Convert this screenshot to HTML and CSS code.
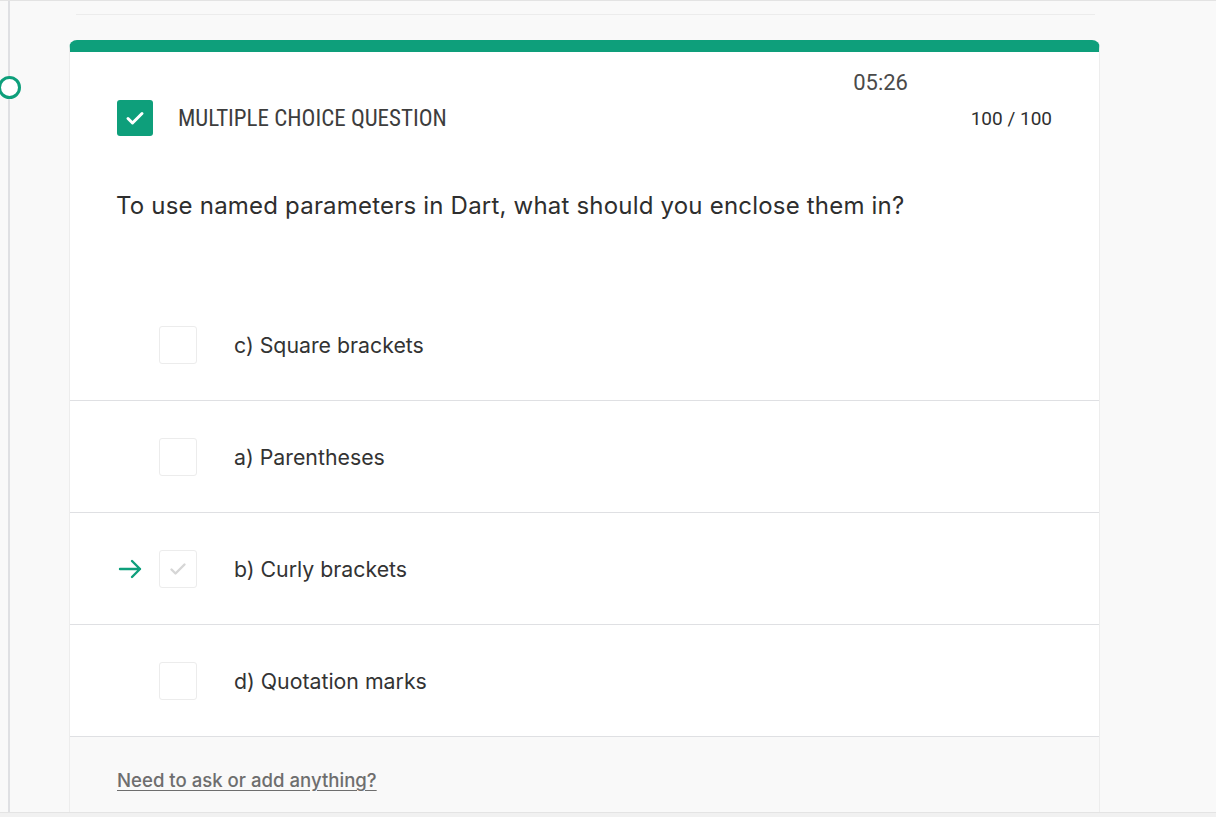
FILE: index.html
```html
<!DOCTYPE html>
<html lang="en">
<head>
<meta charset="utf-8">
<title>Multiple choice question</title>
<link rel="stylesheet" href="styles.css">
</head>
<body>
<div class="topline"></div>
<div class="layout">
  <aside class="rail">
    <span class="rail-dot"></span>
  </aside>
  <main class="content">
    <div class="prev-card"></div>
    <section class="card">
      <div class="timer-row"><span class="timer">05:26</span></div>
      <div class="head">
        <span class="head-check">
          <svg width="20" height="16" viewBox="0 0 20 16"><path d="M3 8.5l4.5 4.5L17 3.5" fill="none" stroke="#fff" stroke-width="3" stroke-linecap="round" stroke-linejoin="round"/></svg>
        </span>
        <span class="head-title">MULTIPLE CHOICE QUESTION</span>
        <span class="score">100 / 100</span>
      </div>
      <p class="question">To use named parameters in Dart, what should you enclose them in?</p>
      <ul class="options">
        <li class="option">
          <span class="arrow"></span>
          <span class="box"></span>
          <span class="label">c) Square brackets</span>
        </li>
        <li class="option">
          <span class="arrow"></span>
          <span class="box"></span>
          <span class="label">a) Parentheses</span>
        </li>
        <li class="option">
          <span class="arrow">
            <svg width="26" height="20" viewBox="0 0 26 20"><path d="M3 10h20M15 2l8 8-8 8" fill="none" stroke="#0e9f7b" stroke-width="2.4" stroke-linecap="round" stroke-linejoin="round"/></svg>
          </span>
          <span class="box">
            <svg width="18" height="14" viewBox="0 0 18 14"><path d="M2.5 7.5l4 4L15.5 2.5" fill="none" stroke="#d6d6d6" stroke-width="2.4" stroke-linecap="round" stroke-linejoin="round"/></svg>
          </span>
          <span class="label">b) Curly brackets</span>
        </li>
        <li class="option">
          <span class="arrow"></span>
          <span class="box"></span>
          <span class="label">d) Quotation marks</span>
        </li>
      </ul>
      <footer class="card-foot">
        <a class="ask" href="#">Need to ask or add anything?</a>
      </footer>
    </section>
  </main>
</div>
<div class="bottombar"></div>
</body>
</html>
```

FILE: styles.css
```css
html, body {
  margin: 0;
  padding: 0;
  height: 100%;
  overflow: hidden;
}
body {
  background: #f9f9f9;
  font-family: Inter, "Noto Sans", sans-serif;
  color: #333;
}
.topline {
  height: 1px;
  background: #e3e3e3;
}
.layout {
  display: flex;
  height: 811px;
}
.rail {
  width: 69px;
  flex: 0 0 69px;
  position: relative;
}
.rail::before {
  content: "";
  display: block;
  margin-left: 8px;
  width: 2px;
  height: 100%;
  background: #dfe0e3;
}
.rail-dot {
  position: absolute;
  left: -2px;
  top: 75px;
  width: 17px;
  height: 17px;
  border: 3px solid #0e9f7b;
  border-radius: 50%;
  background: #fff;
}
.content {
  width: 1031px;
  display: flex;
  flex-direction: column;
}
.prev-card {
  height: 13px;
  margin-left: 7px;
  margin-right: 5px;
  border-bottom: 1px solid #ececec;
  margin-bottom: 25px;
}
.card {
  flex: 1;
  display: flex;
  flex-direction: column;
  background: #fff;
  border-top: 12px solid #0e9f7b;
  border-left: 1px solid #ededed;
  border-right: 1px solid #ededed;
  border-radius: 8px 8px 0 0;
}
.timer-row {
  display: flex;
  justify-content: flex-end;
  padding: 18px 191px 0 0;
  height: 28px;
}
.timer {
  font-family: Roboto, "Liberation Sans", sans-serif;
  font-size: 22px;
  color: #4a4a4a;
  line-height: 26px;
}
.head {
  display: flex;
  align-items: center;
  padding: 2px 47px 0 47px;
  height: 36px;
}
.head-check {
  width: 36px;
  height: 36px;
  border-radius: 3px;
  background: #0e9f7b;
  display: flex;
  align-items: center;
  justify-content: center;
}
.head-title {
  margin-left: 25px;
  font-family: Roboto, "Liberation Sans", sans-serif;
  font-stretch: 87.5%;
  font-size: 23px;
  color: #3d3d3d;
}
.score {
  margin-left: auto;
  font-family: Roboto, "Liberation Sans", sans-serif;
  font-size: 19px;
  color: #2f2f2f;
}
.question {
  margin: 0;
  padding: 55px 48px 0 46px;
  height: 98px;
  font-size: 24px;
  letter-spacing: 0.2px;
  line-height: 30px;
  color: #2e2e2e;
}
.options {
  list-style: none;
  margin: 0;
  padding: 0;
}
.option {
  display: flex;
  align-items: center;
  height: 111px;
  border-bottom: 1px solid #dfe0e3;
  padding-left: 47px;
}
.arrow {
  width: 42px;
  height: 20px;
  display: flex;
  align-items: center;
}
.box {
  width: 38px;
  height: 38px;
  box-sizing: border-box;
  border: 1px solid #ececec;
  border-radius: 3px;
  display: flex;
  align-items: center;
  justify-content: center;
}
.label {
  margin-left: 37px;
  font-size: 21.3px;
  color: #333;
}
.card-foot {
  flex: 1;
  background: #f9f9f9;
  padding: 32px 48px 0 47px;
}
.ask {
  font-size: 18.6px;
  font-weight: 500;
  color: #6e6e6e;
  text-decoration: underline;
  text-underline-offset: 3px;
}
.bottombar {
  height: 5px;
  border-top: 1px solid #e4e4e4;
  background: #f1f1f1;
}
```
